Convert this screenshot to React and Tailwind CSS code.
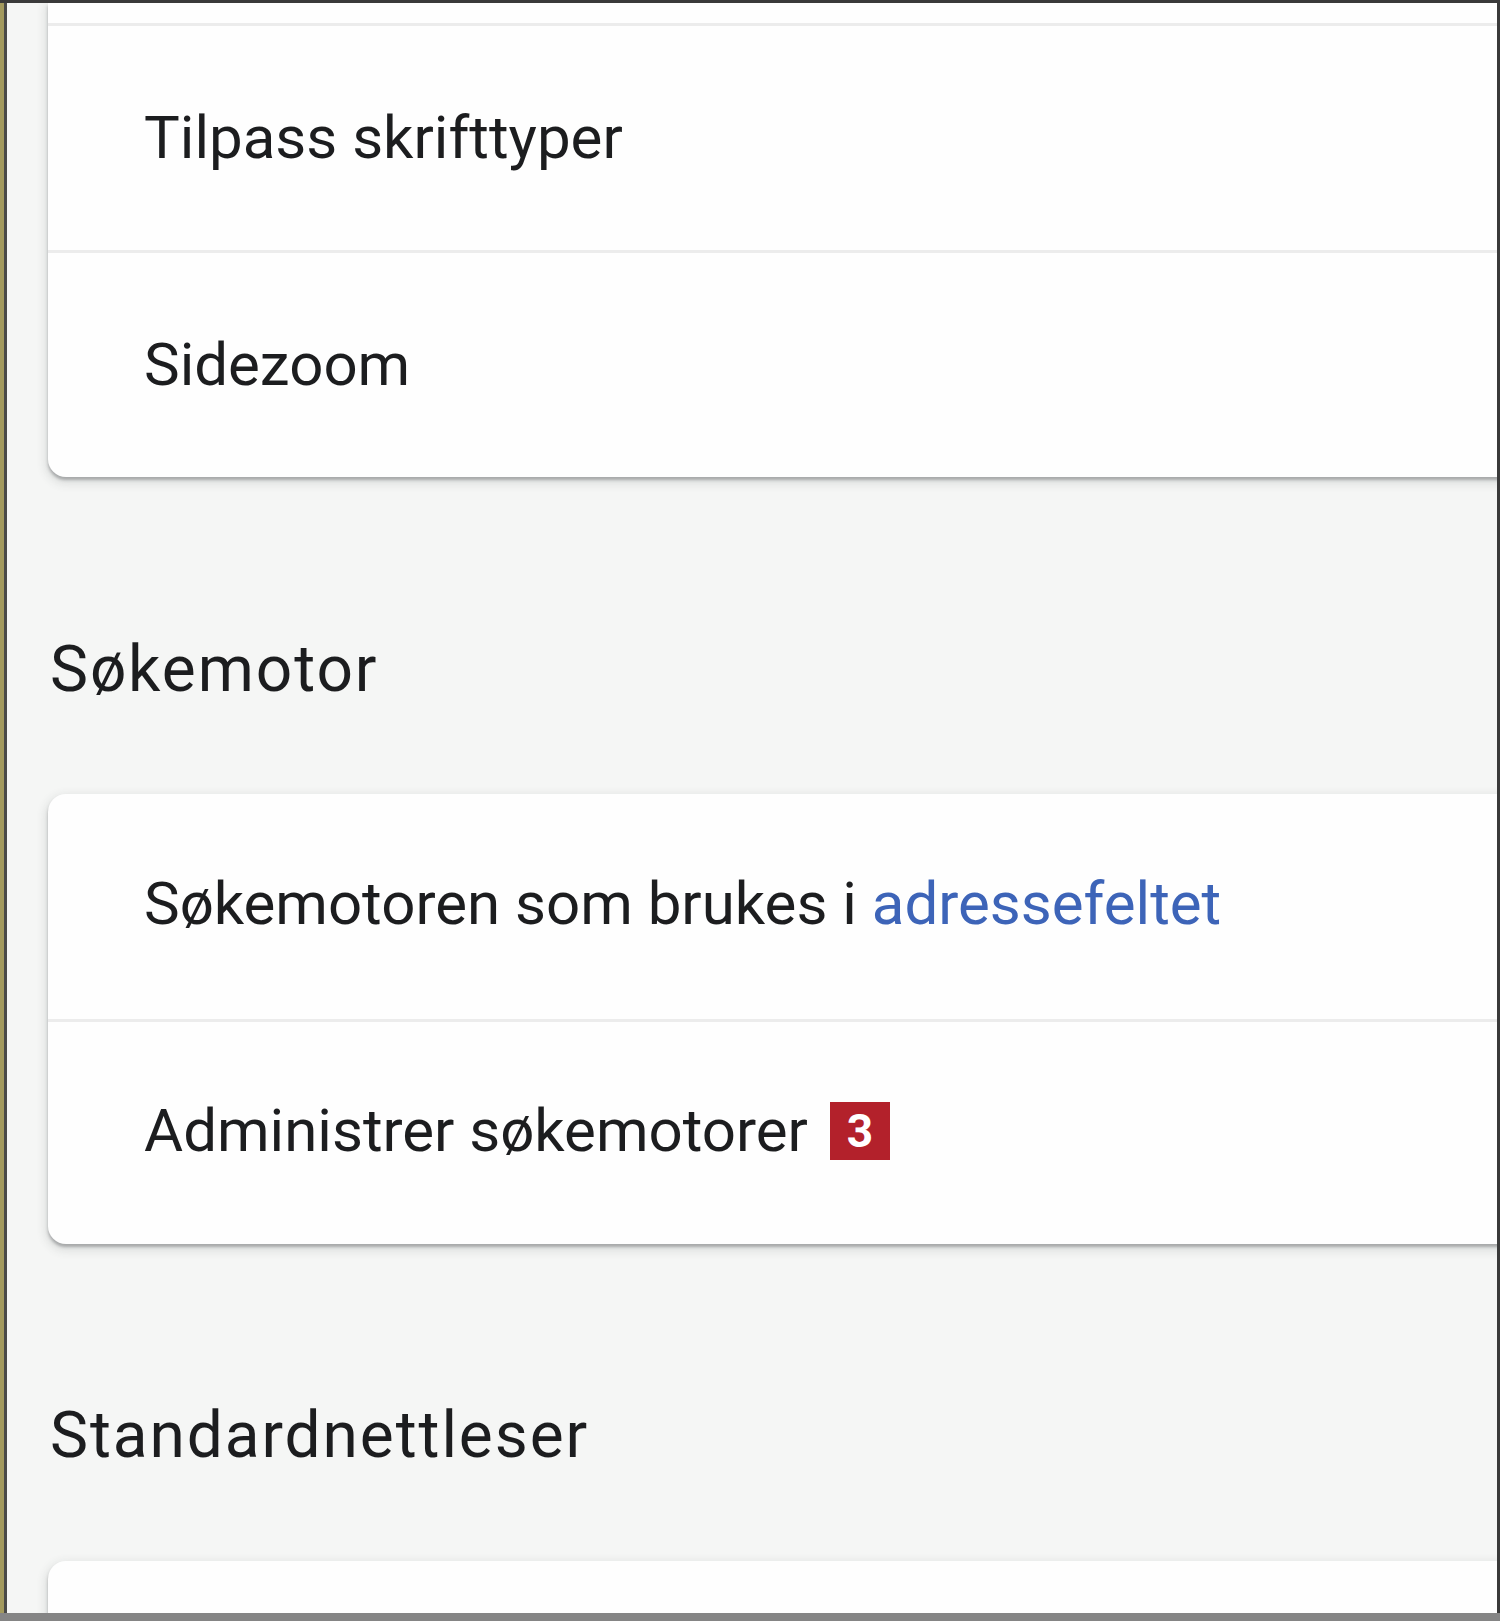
const font = { fontFamily: 'Roboto, "Noto Sans", "Liberation Sans", sans-serif' };

function Row({ children, first, tall }) {
  return (
    <div
      className={
        'flex items-center pl-[96px] text-[60px] text-[#1c1d1f] ' +
        (tall ? 'h-[227px] ' : 'h-[225px] ') +
        (first ? '' : 'border-t-[3px] border-[#ececec]')
      }
    >
      {children}
    </div>
  );
}

function Card({ children, className = '' }) {
  return (
    <div
      className={
        'w-[1520px] bg-[#fefefe] rounded-[18px] shadow-[0_3px_3px_rgba(60,64,67,0.35),0_4px_10px_3px_rgba(60,64,67,0.12)] ' +
        className
      }
    >
      {children}
    </div>
  );
}

function SectionTitle({ children, className = '' }) {
  return (
    <div className={'pl-[2px] text-[64px] leading-[80px] tracking-[0.03em] text-[#1c1d1f] ' + className}>
      {children}
    </div>
  );
}

export default function App() {
  return (
    <div className="w-[1500px] h-[1621px] flex flex-col bg-[#f5f6f5] overflow-hidden" style={font}>
      <div className="h-[3px] bg-[#3a3a3a] shrink-0" />
      <div className="flex flex-1 min-h-0">
        <div className="w-[4px] bg-[#a39a5e] shrink-0" />
        <div className="w-[3px] bg-[#4a4a48] shrink-0" />
        <main className="flex-1 min-w-0 overflow-hidden pl-[41px]">
          {/* Utseende (cut off at top) */}
          <Card className="rounded-t-none">
            <div className="h-[20px]" />
            <Row tall>Tilpass skrifttyper</Row>
            <Row tall>Sidezoom</Row>
          </Card>

          <SectionTitle className="pt-[153px] pb-[84px]">Søkemotor</SectionTitle>
          <Card>
            <Row first>
              <span className="-mt-[6px]">
                Søkemotoren som brukes i{' '}
                <a className="text-[#3d64b8]">adressefeltet</a>
              </span>
            </Row>
            <Row>
              <span className="-mt-[4px]">Administrer søkemotorer</span>
              <span className="ml-[22px] -mt-[4px] w-[60px] h-[58px] flex items-center justify-center bg-[#b3212b] text-white font-bold text-[46px] leading-none">
                3
              </span>
            </Row>
          </Card>

          <SectionTitle className="pt-[152px] pb-[85px]">Standardnettleser</SectionTitle>
          <Card className="h-[200px]" />
        </main>
        <div className="w-[3px] bg-[#3a3a3a] shrink-0" />
      </div>
      <div className="h-[8px] bg-[#858585] shrink-0" />
    </div>
  );
}
